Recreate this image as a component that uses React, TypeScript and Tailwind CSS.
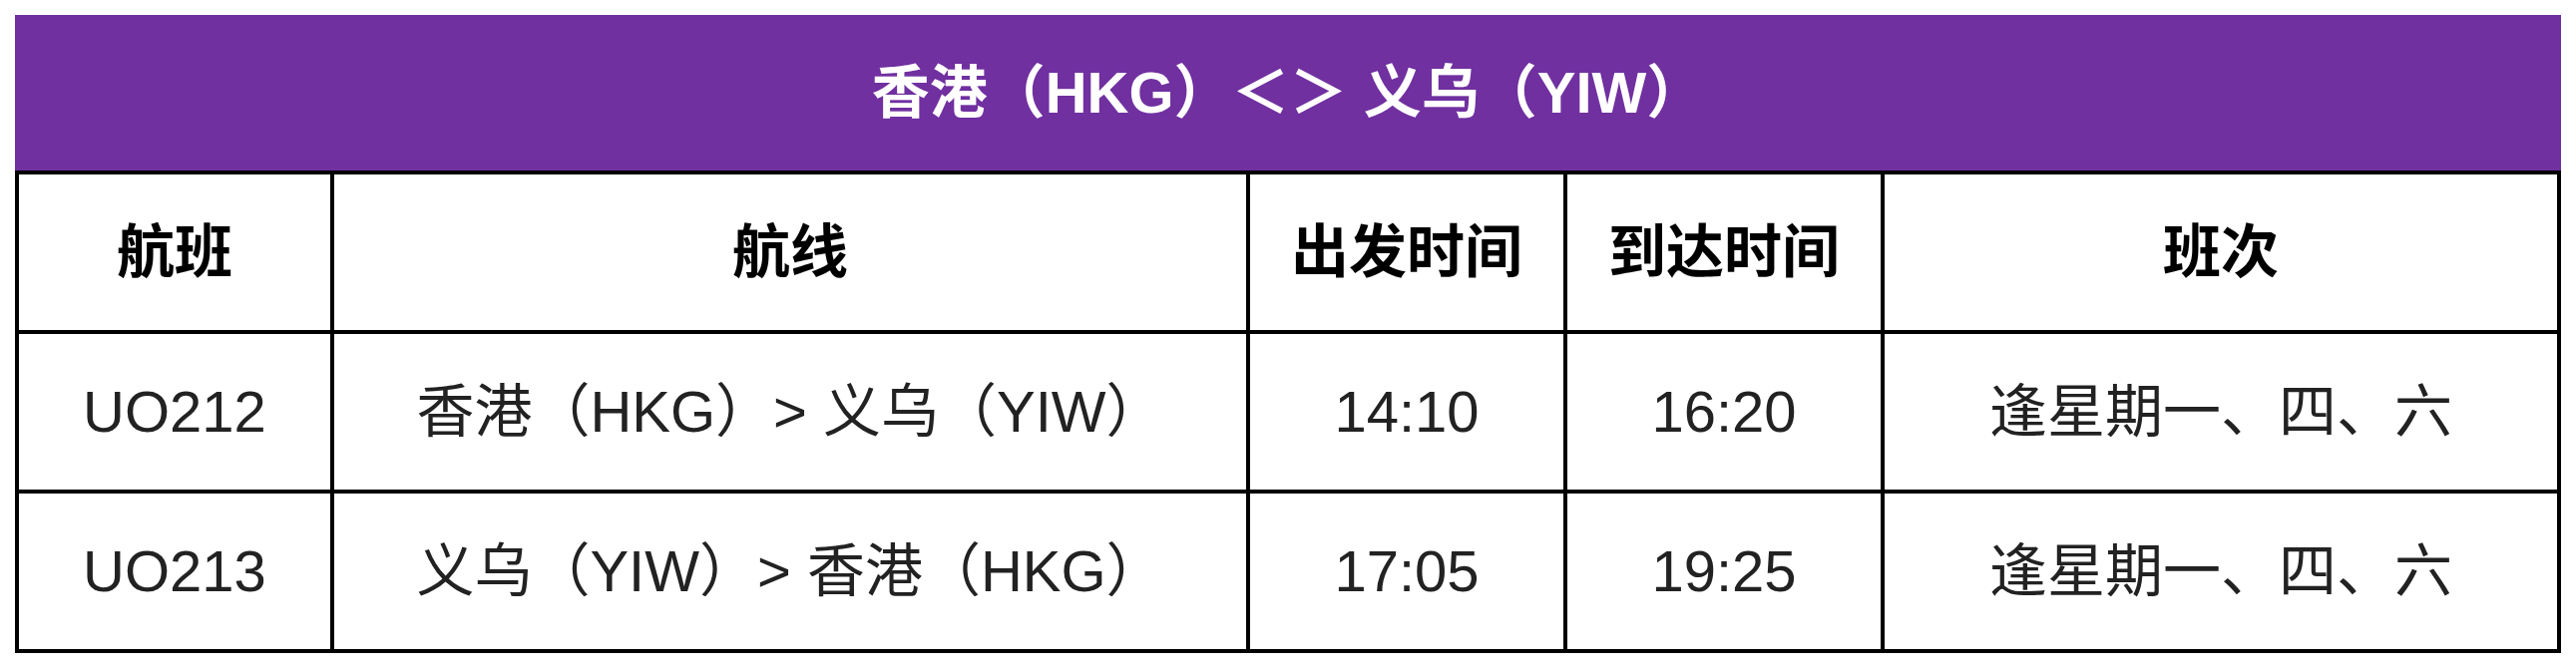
import React from 'react';

const font = "font-['Liberation_Sans','Noto_Sans_CJK_SC',sans-serif]";

const rows = [
  { no: 'UO212', route: '香港（HKG）> 义乌（YIW）', dep: '14:10', arr: '16:20', days: '逢星期一、四、六' },
  { no: 'UO213', route: '义乌（YIW）> 香港（HKG）', dep: '17:05', arr: '19:25', days: '逢星期一、四、六' },
];

const headers = ['航班', '航线', '出发时间', '到达时间', '班次'];

const Cell = ({ children, bold }: { children: React.ReactNode; bold?: boolean }) => (
  <div
    className={
      'bg-white h-[156px] flex items-center justify-center text-[58px] leading-none whitespace-nowrap ' +
      (bold ? 'font-bold text-black' : 'text-[#222]')
    }
  >
    {children}
  </div>
);

const App = () => {
  return (
    <div className={`min-h-screen bg-white pt-[15px] pl-[15px] ${font}`}>
      <div className="w-[2552px]">
        {/* Title bar */}
        <div className="h-[156px] bg-[#7030a0] flex items-center justify-center text-white font-bold text-[58px] leading-none">
          香港（HKG）＜＞ 义乌（YIW）
        </div>

        {/* Schedule table */}
        <div className="grid grid-cols-[312px_914px_314px_314px_674px] gap-[4px] bg-black p-[4px]">
          {headers.map((h) => (
            <Cell key={h} bold>
              {h}
            </Cell>
          ))}
          {rows.map((r) => (
            <React.Fragment key={r.no}>
              <Cell>{r.no}</Cell>
              <Cell>{r.route}</Cell>
              <Cell>{r.dep}</Cell>
              <Cell>{r.arr}</Cell>
              <Cell>{r.days}</Cell>
            </React.Fragment>
          ))}
        </div>
      </div>
    </div>
  );
};

export default App;
